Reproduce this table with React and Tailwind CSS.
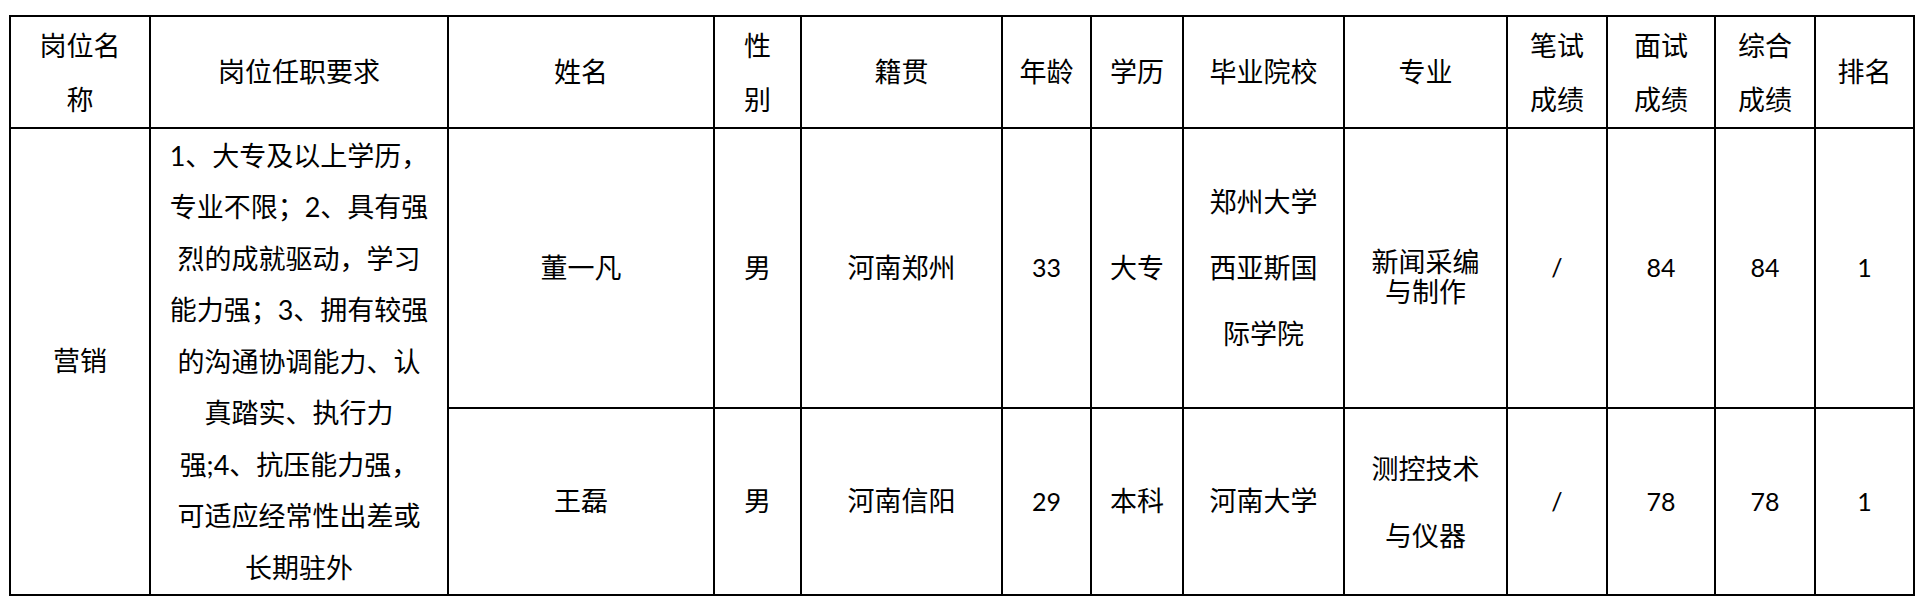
import clsx from 'clsx';

// Candidate table: header row + two applicants sharing one position
const header = [
  ['岗位名', '称'],
  ['岗位任职要求'],
  ['姓名'],
  ['性', '别'],
  ['籍贯'],
  ['年龄'],
  ['学历'],
  ['毕业院校'],
  ['专业'],
  ['笔试', '成绩'],
  ['面试', '成绩'],
  ['综合', '成绩'],
  ['排名'],
];

const requirements = [
  '1、大专及以上学历，',
  '专业不限；2、具有强',
  '烈的成就驱动，学习',
  '能力强；3、拥有较强',
  '的沟通协调能力、认',
  '真踏实、执行力',
  '强;4、抗压能力强，',
  '可适应经常性出差或',
  '长期驻外',
];

function Cell({ children, className }) {
  return (
    <div
      className={clsx(
        'bg-white flex flex-col items-center justify-center text-center whitespace-nowrap',
        className
      )}
    >
      {children}
    </div>
  );
}

function Lines({ lines, className }) {
  return lines.map((l, i) => (
    <div key={i} className={className}>
      {l}
    </div>
  ));
}

function Num({ children }) {
  return <span className="text-[25px]">{children}</span>;
}

export default function App() {
  return (
    <div className="min-h-screen bg-white pt-[15px] pl-[9px] text-black font-['Lato','Noto_Sans_CJK_SC',sans-serif] text-[27px]">
      <div className="grid w-fit bg-black p-[2px] gap-[2px] grid-cols-[138px_296px_264px_85px_199px_87px_90px_159px_161px_98px_106px_98px_97px] grid-rows-[110px_278px_185px]">
        {/* Header */}
        {header.map((h, i) => (
          <Cell key={i} className={h.length > 1 ? 'pt-[2px]' : ''}>
            <Lines lines={h} className="leading-[54px]" />
          </Cell>
        ))}

        {/* Merged position cells */}
        <Cell className="row-span-2">营销</Cell>
        <Cell className="row-span-2">
          <Lines lines={requirements} className="leading-[51.5px]" />
        </Cell>

        {/* Row 1 */}
        <Cell>董一凡</Cell>
        <Cell>男</Cell>
        <Cell>河南郑州</Cell>
        <Cell><Num>33</Num></Cell>
        <Cell>大专</Cell>
        <Cell>
          <Lines lines={['郑州大学', '西亚斯国', '际学院']} className="leading-[66px]" />
        </Cell>
        <Cell className="pt-[18px]">
          <Lines lines={['新闻采编', '与制作']} className="leading-[30px]" />
        </Cell>
        <Cell><Num>/</Num></Cell>
        <Cell><Num>84</Num></Cell>
        <Cell><Num>84</Num></Cell>
        <Cell><Num>1</Num></Cell>

        {/* Row 2 */}
        <Cell>王磊</Cell>
        <Cell>男</Cell>
        <Cell>河南信阳</Cell>
        <Cell><Num>29</Num></Cell>
        <Cell>本科</Cell>
        <Cell>河南大学</Cell>
        <Cell>
          <Lines lines={['测控技术', '与仪器']} className="leading-[67px]" />
        </Cell>
        <Cell><Num>/</Num></Cell>
        <Cell><Num>78</Num></Cell>
        <Cell><Num>78</Num></Cell>
        <Cell><Num>1</Num></Cell>
      </div>
    </div>
  );
}
